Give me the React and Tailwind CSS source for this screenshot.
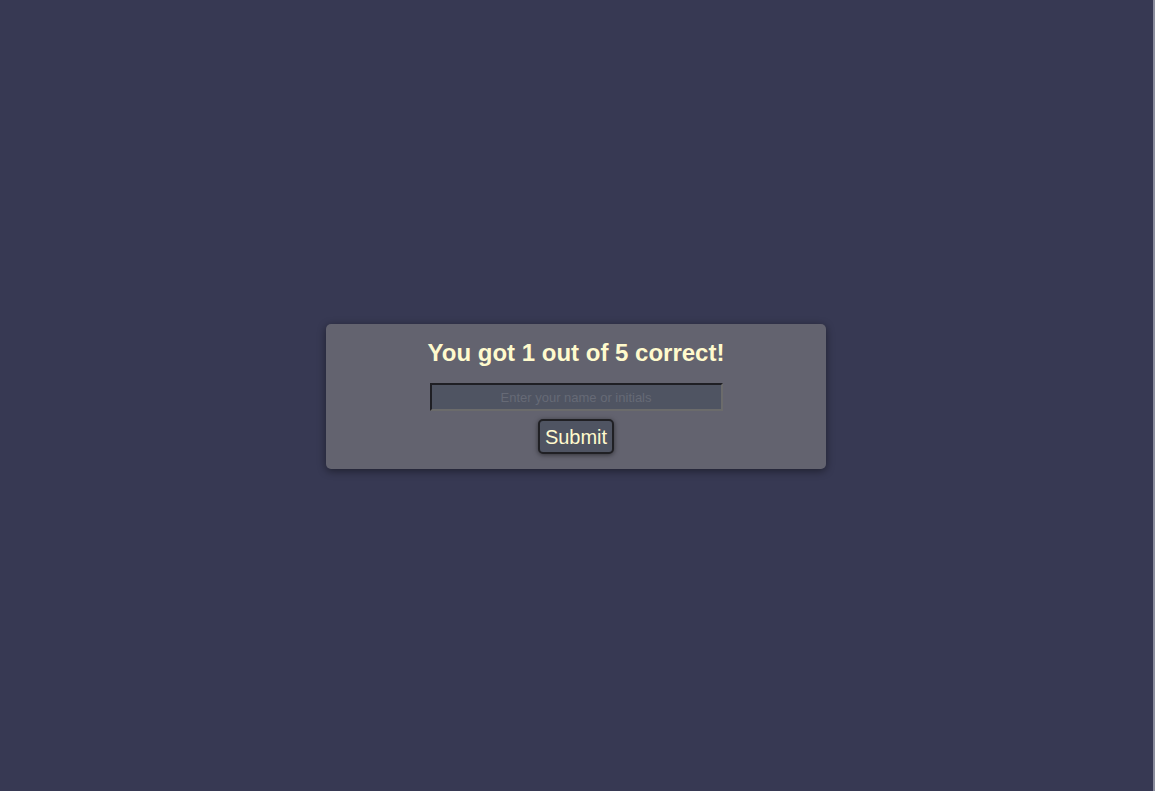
export default function App() {
  return (
    <div className="flex h-[791px] w-full items-center justify-center border-r-2 border-[#8a8c9c] bg-[#373953] pr-px font-['Liberation_Sans',Arial,sans-serif]">
      <div className="mt-[2px] flex w-[500px] flex-col items-center rounded-[5px] bg-[#63636f] pb-[15px] pt-[14px] shadow-[0_2px_8px_rgba(0,0,0,0.45)]">
        <h1 className="text-[24px] font-bold leading-[30px] text-[#fffacd]">You got 1 out of 5 correct!</h1>
        <input
          type="text"
          placeholder="Enter your name or initials"
          className="mt-[15px] h-[28px] w-[293px] border-2 border-t-[#1f1f24] border-l-[#1f1f24] border-r-[#6b6b6b] border-b-[#6b6b6b] bg-[#4f5462] text-center text-[13px] text-[#fffacd] outline-none placeholder:text-[#666a76]"
        />
        <button className="mt-[8px] h-[35px] rounded-[5px] border-2 border-[#202024] bg-[#4f5462] px-[5px] text-[20px] leading-none text-[#fffacd] shadow-[0_1px_5px_rgba(0,0,0,0.5)]">
          Submit
        </button>
      </div>
    </div>
  );
}
